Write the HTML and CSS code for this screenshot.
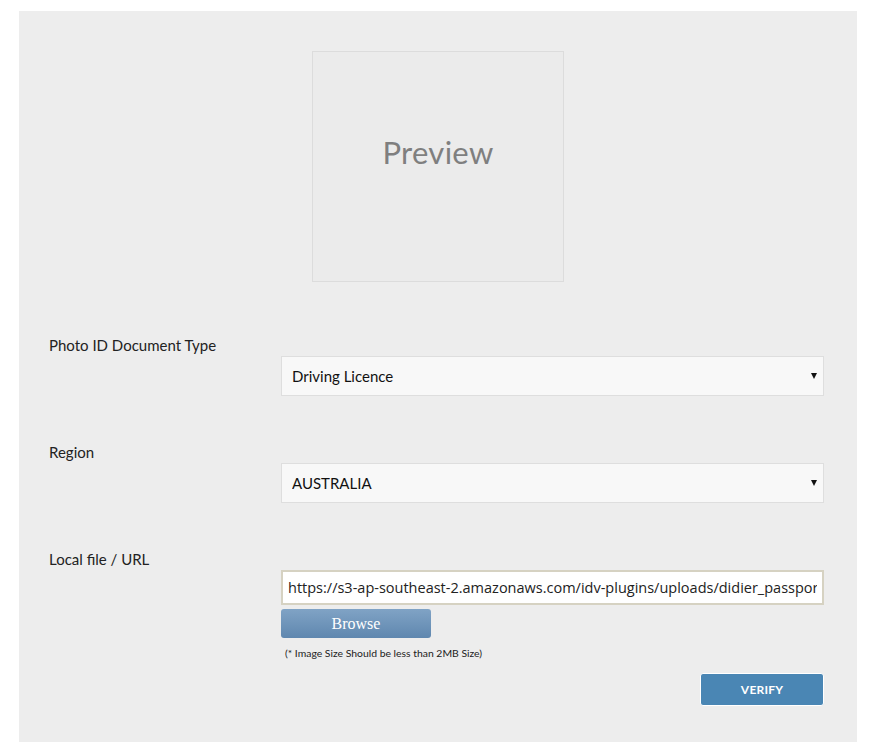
FILE: index.html
```html
<!DOCTYPE html>
<html>
<head>
<meta charset="utf-8">
<link rel="stylesheet" href="styles.css">
</head>
<body>
<div class="panel">
  <div class="preview"><span>Preview</span></div>
  <div class="row">
    <div class="label">Photo ID Document Type</div>
    <div class="field select-wrap">
      <select class="select"><option>Driving Licence</option></select>
    </div>
  </div>
  <div class="row">
    <div class="label">Region</div>
    <div class="field select-wrap">
      <select class="select"><option>AUSTRALIA</option></select>
    </div>
  </div>
  <div class="row last">
    <div class="label">Local file / URL</div>
    <div class="field">
      <input class="url" type="text" value="https://s3-ap-southeast-2.amazonaws.com/idv-plugins/uploads/didier_passport.jpg">
      <button class="browse" type="button">Browse</button>
      <div class="note">(* Image Size Should be less than 2MB Size)</div>
    </div>
  </div>
  <div class="actions">
    <button class="verify" type="button">VERIFY</button>
  </div>
</div>
</body>
</html>
```

FILE: styles.css
```css
html, body {
  margin: 0;
  padding: 0;
  background: #ffffff;
}
body {
  padding: 11px 12px 0 19px;
  font-family: Lato, "Noto Sans", sans-serif;
  color: #222;
}
.panel {
  background: #ededed;
  width: 838px;
  height: 731px;
  box-sizing: border-box;
  padding: 40px 33px 0 30px;
}
.preview {
  width: 252px;
  height: 231px;
  box-sizing: border-box;
  margin-left: 263px;
  border: 1px solid #dcdcdc;
  background: #ebebeb;
  display: flex;
  justify-content: center;
  align-items: flex-start;
  padding-top: 80px;
}
.preview span {
  font-size: 31px;
  line-height: 40px;
  color: #7f7f7f;
  letter-spacing: 0.3px;
}
.row {
  display: flex;
  flex-direction: column;
  margin-top: 53px;
}
.row + .row {
  margin-top: 46px;
}
.label {
  font-size: 15px;
  line-height: 20px;
  color: #222;
}
.field {
  margin-left: 232px;
  margin-top: 1px;
}
.select-wrap {
  position: relative;
  height: 40px;
}
.select {
  appearance: none;
  -webkit-appearance: none;
  width: 100%;
  height: 40px;
  box-sizing: border-box;
  background: #f8f8f8;
  border: 1px solid #dedede;
  border-radius: 0;
  padding: 0 0 0 10px;
  font-family: Lato, "Noto Sans", sans-serif;
  font-size: 15px;
  color: #111;
  outline: none;
}
.select-wrap::after {
  content: "";
  position: absolute;
  right: 7px;
  top: 17px;
  width: 0;
  height: 0;
  border-left: 3px solid transparent;
  border-right: 3px solid transparent;
  border-top: 6px solid #111;
  pointer-events: none;
}
.url {
  display: block;
  width: 100%;
  height: 35px;
  box-sizing: border-box;
  border: 2px solid #d6d2c2;
  background: #fff;
  padding: 0 5px;
  font-family: "Open Sans", sans-serif;
  font-size: 14.5px;
  color: #222;
  outline: none;
}
.browse {
  display: block;
  margin-top: 4px;
  width: 150px;
  height: 29px;
  border: none;
  border-radius: 3px;
  background: linear-gradient(#80a3c5, #5f87af);
  color: #fff;
  font-family: "Liberation Serif", serif;
  font-size: 16px;
  padding: 0;
}
.note {
  font-size: 10.4px;
  line-height: 14px;
  margin-top: 8px;
  margin-left: 4px;
  color: #222;
}
.actions {
  display: flex;
  justify-content: flex-end;
  margin-top: 13px;
}
.verify {
  width: 124px;
  height: 33px;
  box-sizing: border-box;
  background: #4a86b4;
  border: 1px solid #fff;
  border-radius: 3px;
  color: #fff;
  font-family: Lato, "Noto Sans", sans-serif;
  font-weight: 700;
  font-size: 12px;
  letter-spacing: 0.2px;
  padding: 0;
}
```
